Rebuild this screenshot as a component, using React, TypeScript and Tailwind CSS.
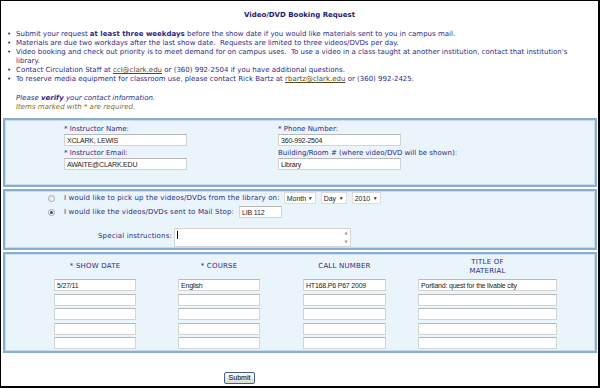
import React from "react";

const navy = "text-[#2b2b85]";

function TextInput({ value = "", w, cls = "" }: { value?: string; w: string; cls?: string }) {
  return (
    <div
      className={`${w} h-[12px] bg-white border border-[#d4d4d4] border-t-[#b8b8b8] flex items-center pl-[2px] font-['Liberation_Sans',sans-serif] text-[7px] tracking-[-0.2px] text-[#222] whitespace-nowrap overflow-hidden ${cls}`}
    >
      {value}
    </div>
  );
}

function Radio({ checked }: { checked?: boolean }) {
  return (
    <span className="w-[7px] h-[7px] rounded-full border border-[#a8a8a8] bg-gradient-to-br from-[#e4e4e4] to-[#fafafa] flex items-center justify-center">
      {checked && <span className="w-[3px] h-[3px] rounded-full bg-[#3a4a6a]" />}
    </span>
  );
}

function Select({ label, w }: { label: string; w: string }) {
  return (
    <div
      className={`${w} h-[12px] bg-white border border-[#dcdcdc] flex items-center justify-between pl-[2px] pr-[2px] font-['Liberation_Sans',sans-serif] text-[7px] text-[#222]`}
    >
      <span>{label}</span>
      <span className="text-[5px] text-[#333]">▼</span>
    </div>
  );
}

function Panel({ children, cls = "" }: { children: React.ReactNode; cls?: string }) {
  return (
    <div
      className={`ml-[2px] mr-[1px] border-2 border-[#8badcf] shadow-[inset_1px_1px_0_#c8dcee,inset_-1px_-1px_0_#c8dcee] bg-[#eaf4fb] ${cls}`}
    >
      {children}
    </div>
  );
}

export default function App() {
  const rows = [
    ["5/27/11", "English", "HT168.P6 P67 2009", "Portland: quest for the livable city"],
    ["", "", "", ""],
    ["", "", "", ""],
    ["", "", "", ""],
    ["", "", "", ""],
  ];
  return (
    <div className="w-[600px] h-[388px] bg-white overflow-hidden">
      <div
        className={`w-[600px] h-[388px] border-l border-t border-r-2 border-b-2 border-black font-['DejaVu_Sans',sans-serif] text-[7px] leading-[9px] ${navy}`}
      >
        <div className="pt-[10px] text-center font-bold text-[#1c1c6e]">Video/DVD Booking Request</div>
        <ul className="mt-[10px] pl-[6px] whitespace-nowrap">
          <li className="flex">
            <span className="w-[9px]">•</span>
            <span>
              Submit your request <b>at least three weekdays</b> before the show date if you would like materials sent to
              you in campus mail.
            </span>
          </li>
          <li className="flex">
            <span className="w-[9px]">•</span>
            <span>Materials are due two workdays after the last show date.&nbsp; Requests are limited to three videos/DVDs per day.</span>
          </li>
          <li className="flex">
            <span className="w-[9px]">•</span>
            <span>
              Video booking and check out priority is to meet demand for on campus uses.&nbsp; To use a video in a class taught
              at another institution, contact that institution's
              <br />
              library.
            </span>
          </li>
          <li className="flex">
            <span className="w-[9px]">•</span>
            <span>
              Contact Circulation Staff at <span className="underline text-[#5a4a1a]">ccl@clark.edu</span> or (360) 992-2504 if
              you have additional questions.
            </span>
          </li>
          <li className="flex">
            <span className="w-[9px]">•</span>
            <span>
              To reserve media equipment for classroom use, please contact Rick Bartz at{" "}
              <span className="underline text-[#5a4a1a]">rbartz@clark.edu</span> or (360) 992-2425.
            </span>
          </li>
        </ul>
        <div className="mt-[10px] pl-[15px] italic">
          <div>
            Please <b>verify</b> your contact information.
          </div>
          <div className="text-[#8a6a1a]">Items marked with * are required.</div>
        </div>

        {/* Panel 1 */}
        <Panel cls="mt-[6px] h-[69px]">
          <div className="grid grid-cols-[214px_auto] pl-[59px] pt-[5px]">
            <div>
              <div>* Instructor Name:</div>
              <TextInput w="w-[123px]" value="XCLARK, LEWIS" />
              <div className="mt-[3px]">* Instructor Email:</div>
              <TextInput w="w-[123px]" value="AWAITE@CLARK.EDU" />
            </div>
            <div>
              <div>* Phone Number:</div>
              <TextInput w="w-[123px]" value="360-992-2504" />
              <div className="mt-[3px]">Building/Room # (where video/DVD will be shown):</div>
              <TextInput w="w-[123px]" value="Library" />
            </div>
          </div>
        </Panel>

        {/* Panel 2 */}
        <Panel cls="mt-[2px] h-[61px]">
          <div className="pl-[43px] pt-[1px] flex flex-col">
            <div className="flex items-center h-[12px]">
              <Radio />
              <span className="ml-[9px] tracking-[0.15px]">I would like to pick up the videos/DVDs from the library on:</span>
              <div className="ml-[4px] flex gap-[5px]">
                <Select label="Month" w="w-[32px]" />
                <Select label="Day" w="w-[26px]" />
                <Select label="2010" w="w-[29px]" />
              </div>
            </div>
            <div className="flex items-center h-[12px] mt-[2px]">
              <Radio checked />
              <span className="ml-[9px] tracking-[0.15px]">I would like the videos/DVDs sent to Mail Stop:</span>
              <TextInput w="w-[43px]" value="LIB 112" cls="ml-[5px]" />
            </div>
          </div>
          <div className="flex items-start mt-[10px] pl-[93px]">
            <span className="mt-[4px] tracking-[0.15px]">Special instructions:</span>
            <div className="ml-[2px] w-[177px] h-[19px] bg-white border border-[#d4d4d4] relative">
              <span className="absolute left-[2px] top-[2px] w-px h-[8px] bg-black" />
              <div className="absolute right-0 top-0 bottom-0 w-[8px] flex flex-col justify-between items-center py-[1px] text-[4px] text-[#999] leading-[6px]">
                <span>▲</span>
                <span>▼</span>
              </div>
            </div>
          </div>
        </Panel>

        {/* Panel 3 */}
        <Panel cls="mt-[2px] h-[101px]">
          <div className="pl-[49px] grid grid-cols-[124px_125px_115px_auto]">
            {[
              { h: ["* SHOW DATE"], w: "w-[82px]" },
              { h: ["* COURSE"], w: "w-[82px]" },
              { h: ["CALL NUMBER"], w: "w-[83px]" },
              { h: ["TITLE OF", "MATERIAL"], w: "w-[139px]" },
            ].map((c, ci) => (
              <div key={ci} className="flex flex-col">
                <div className={`${c.w} h-[25px] flex flex-col items-center justify-center text-center tracking-[0.2px]`}>
                  {c.h.map((t) => (
                    <div key={t}>{t}</div>
                  ))}
                </div>
                <div className="flex flex-col gap-[2.5px]">
                  {rows.map((r, ri) => (
                    <TextInput key={ri} w={c.w} value={r[ci]} />
                  ))}
                </div>
              </div>
            ))}
          </div>
        </Panel>

        <div className="mt-[19px] pl-[223px]">
          <button className="w-[31px] h-[12px] rounded-[2px] border border-[#4a5a8a] bg-gradient-to-b from-[#fbfbfb] to-[#dcdcd4] font-['Liberation_Sans',sans-serif] text-[7px] leading-[10px] text-black">
            Submit
          </button>
        </div>
      </div>
    </div>
  );
}
